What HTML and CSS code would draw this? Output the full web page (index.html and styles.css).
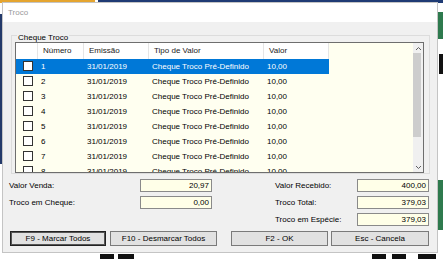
FILE: index.html
```html
<!DOCTYPE html>
<html>
    <head>
        <title>Troco</title>
        <meta charset="UTF-8">
        <link rel="stylesheet" href="styles.css">
    </head>
    <body>
        <!-- application behind the dialog -->
        <div class="desk">
            <div class="bg-top-orange"></div>
            <div class="bg-top-navy"></div>
            <div class="bg-left-navy"></div>
            <div class="bg-right-green"></div>
            <div class="bg-right-black"></div>
            <div class="bg-right-green2"></div>
            <div class="blot b1"></div>
            <div class="blot b2"></div>
            <div class="blot b3"></div>
            <div class="blot b4"></div>
            <div class="blot b5"></div>
        </div>

        <div class="dialog">
            <div class="titlebar">Troco</div>
            <div class="dialog-body">
                <div class="group">
                    <div class="group-title">Cheque Troco</div>
                    <div class="grid">
                        <div class="table">
                            <div class="row head">
                                <div class="cell c-cb"></div>
                                <div class="cell c-num">Número</div>
                                <div class="cell c-em">Emissão</div>
                                <div class="cell c-tipo">Tipo de Valor</div>
                                <div class="cell c-val">Valor</div>
                            </div>
                            <div class="row selected">
                                <div class="cell c-cb"><span class="check"></span></div>
                                <div class="cell c-num">1</div>
                                <div class="cell c-em">31/01/2019</div>
                                <div class="cell c-tipo">Cheque Troco Pré-Definido</div>
                                <div class="cell c-val">10,00</div>
                            </div>
                            <div class="row">
                                <div class="cell c-cb"><span class="check"></span></div>
                                <div class="cell c-num">2</div>
                                <div class="cell c-em">31/01/2019</div>
                                <div class="cell c-tipo">Cheque Troco Pré-Definido</div>
                                <div class="cell c-val">10,00</div>
                            </div>
                            <div class="row">
                                <div class="cell c-cb"><span class="check"></span></div>
                                <div class="cell c-num">3</div>
                                <div class="cell c-em">31/01/2019</div>
                                <div class="cell c-tipo">Cheque Troco Pré-Definido</div>
                                <div class="cell c-val">10,00</div>
                            </div>
                            <div class="row">
                                <div class="cell c-cb"><span class="check"></span></div>
                                <div class="cell c-num">4</div>
                                <div class="cell c-em">31/01/2019</div>
                                <div class="cell c-tipo">Cheque Troco Pré-Definido</div>
                                <div class="cell c-val">10,00</div>
                            </div>
                            <div class="row">
                                <div class="cell c-cb"><span class="check"></span></div>
                                <div class="cell c-num">5</div>
                                <div class="cell c-em">31/01/2019</div>
                                <div class="cell c-tipo">Cheque Troco Pré-Definido</div>
                                <div class="cell c-val">10,00</div>
                            </div>
                            <div class="row">
                                <div class="cell c-cb"><span class="check"></span></div>
                                <div class="cell c-num">6</div>
                                <div class="cell c-em">31/01/2019</div>
                                <div class="cell c-tipo">Cheque Troco Pré-Definido</div>
                                <div class="cell c-val">10,00</div>
                            </div>
                            <div class="row">
                                <div class="cell c-cb"><span class="check"></span></div>
                                <div class="cell c-num">7</div>
                                <div class="cell c-em">31/01/2019</div>
                                <div class="cell c-tipo">Cheque Troco Pré-Definido</div>
                                <div class="cell c-val">10,00</div>
                            </div>
                            <div class="row">
                                <div class="cell c-cb"><span class="check"></span></div>
                                <div class="cell c-num">8</div>
                                <div class="cell c-em">31/01/2019</div>
                                <div class="cell c-tipo">Cheque Troco Pré-Definido</div>
                                <div class="cell c-val">10,00</div>
                            </div>
                        </div>
                        <div class="grid-fill"></div>
                        <div class="scrollbar">
                            <div class="sb-btn">
                                <svg width="7" height="5" viewBox="0 0 7 5"><path d="M1 4 L3.5 1.5 L6 4" fill="none" stroke="#606060" stroke-width="1"/></svg>
                            </div>
                            <div class="sb-thumb"></div>
                            <div class="sb-track"></div>
                            <div class="sb-btn">
                                <svg width="7" height="5" viewBox="0 0 7 5"><path d="M1 1 L3.5 3.5 L6 1" fill="none" stroke="#606060" stroke-width="1"/></svg>
                            </div>
                        </div>
                    </div>
                </div>

                <div class="fields">
                    <div class="col col-left">
                        <div class="field">
                            <span class="label">Valor Venda:</span>
                            <span class="input">20,97</span>
                        </div>
                        <div class="field">
                            <span class="label">Troco em Cheque:</span>
                            <span class="input">0,00</span>
                        </div>
                    </div>
                    <div class="col col-right">
                        <div class="field">
                            <span class="label">Valor Recebido:</span>
                            <span class="input">400,00</span>
                        </div>
                        <div class="field">
                            <span class="label">Troco Total:</span>
                            <span class="input">379,03</span>
                        </div>
                        <div class="field">
                            <span class="label">Troco em Espécie:</span>
                            <span class="input">379,03</span>
                        </div>
                    </div>
                </div>

                <div class="buttons">
                    <button class="btn default b-marcar">F9 - Marcar Todos</button>
                    <button class="btn b-desmarcar">F10 - Desmarcar Todos</button>
                    <button class="btn b-ok">F2 - OK</button>
                    <button class="btn b-cancela">Esc - Cancela</button>
                </div>
            </div>
        </div>
    </body>
</html>
```

FILE: styles.css
```css
* {box-sizing: border-box;}

body {
    margin: 0;
    width: 443px;
    height: 259px;
    overflow: hidden;
    background: #fff;
    font-family: "Liberation Sans", Arial, sans-serif;
    font-size: 8px;
    color: #000;
    position: relative;
}

/* Application window behind the dialog */
.desk div {position: absolute;}
.bg-top-orange {left: 0; top: 0; width: 95px; height: 3px; background: #e5a530;}
.bg-top-navy {left: 98px; top: 0; right: 0; height: 3px; background: #1f3b74;}
.bg-left-navy {left: 0; top: 14px; width: 2px; height: 150px; background: #243a6a;}
.bg-right-green {right: 0; top: 12px; width: 5px; height: 27px; background: #2e7a4e;}
.bg-right-black {right: 0; top: 54px; width: 4px; height: 20px; background: #111;}
.bg-right-green2 {right: 0; top: 180px; width: 5px; height: 50px; background: #2e7a4e;}
/* tops of the large total behind the dialog */
.blot {background: #111; top: 254px; height: 5px;}
.b1 {left: 100px; width: 14px;}
.b2 {left: 118px; width: 16px;}
.b3 {left: 372px; width: 14px;}
.b4 {left: 392px; width: 14px;}
.b5 {left: 418px; width: 18px;}

/* The dialog window */
.dialog {
    position: absolute;
    left: 2px;
    top: 2px;
    width: 436px;
    height: 251px;
    border: 1px solid #c4c4c4;
    background: #f0f0f0;
    z-index: 2;
}

.titlebar {
    height: 19px;
    line-height: 19px;
    padding-left: 5px;
    background: #fff;
    color: #9a9a9a;
}

.dialog-body {
    padding-top: 13px;
}

/* Group box */
.group {
    margin-left: 8px;
    width: 419px;
    border: 1px solid #dcdcdc;
}

.group-title {
    width: fit-content;
    margin: -2px 0 0 5px;
    padding: 0 1px;
    height: 8px;
    line-height: 8px;
    background: #f0f0f0;
}

/* List view */
.grid {
    display: flex;
    margin-left: 3px;
    width: 409px;
    height: 131px;
    border: 1px solid #6e6e6e;
    background: #fffff0;
    overflow: hidden;
}

.table {width: 313px;}
.grid-fill {flex: 1;}

.row {
    display: flex;
    height: 15px;
    line-height: 15px;
    white-space: nowrap;
}
.row.head {
    height: 16px;
    line-height: 16px;
    background: #fff;
    color: #222;
}
.row.selected {
    background: #0078d7;
    color: #fff;
}

.cell {padding-left: 3px; overflow: hidden;}
.head .cell {padding-left: 5px; border-right: 1px solid #e5e5e5;}
.c-cb {width: 22px; padding-left: 7px;}
.head .c-cb {padding-left: 0;}
.c-num {width: 46px;}
.c-em {width: 65px;}
.c-tipo {width: 115px;}
.c-val {width: 65px;}

.check {
    display: inline-block;
    width: 10px;
    height: 10px;
    margin-top: 2px;
    vertical-align: top;
    background: #fff;
    border: 1px solid #333;
}

.scrollbar {
    width: 10px;
    display: flex;
    flex-direction: column;
    background: #f0f0f0;
}
.sb-btn {
    height: 10px;
    display: flex;
    align-items: center;
    justify-content: center;
}
.sb-thumb {
    height: 84px;
    width: 8px;
    background: #cdcdcd;
}
.sb-track {flex: 1;}

/* Value fields */
.fields {
    display: flex;
    margin-top: 5px;
    padding-left: 6px;
}
.col {
    display: flex;
    flex-direction: column;
    gap: 4px;
}
.field {
    display: flex;
    height: 13px;
    line-height: 11px;
}
.col-left .label {width: 131px;}
.col-right {margin-left: 63px;}
.col-right .label {width: 82px;}
.label {line-height: 13px;}
.input {
    width: 72px;
    height: 13px;
    border: 1px solid #8a8a8a;
    background: #ffffe8;
    text-align: right;
    padding-right: 2px;
}

/* Buttons */
.buttons {
    display: flex;
    margin-top: 5px;
    padding-left: 7px;
}
.btn {
    height: 15px;
    padding: 0;
    font-family: "Liberation Sans", Arial, sans-serif;
    font-size: 8px;
    color: #000;
    background: #e1e1e1;
    border: 1px solid #7a7a7a;
}
.btn.default {
    border: 1px solid #222;
    box-shadow: inset 0 0 0 1px #555;
}
.b-marcar {width: 96px;}
.b-desmarcar {width: 107px; margin-left: 4px;}
.b-ok {width: 97px; margin-left: 14px;}
.b-cancela {width: 98px; margin-left: 3px;}
```
